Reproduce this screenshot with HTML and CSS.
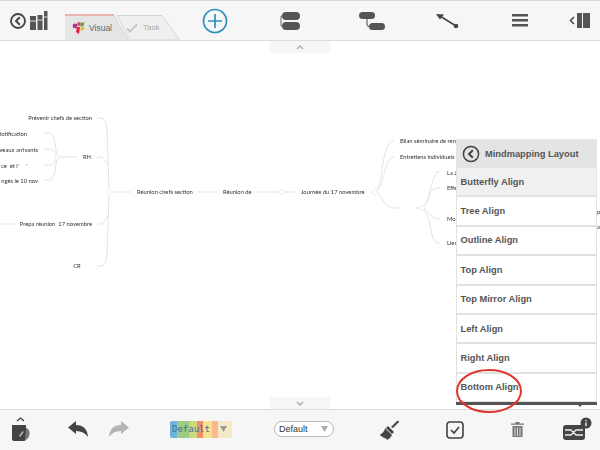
FILE: index.html
```html
<!DOCTYPE html>
<html lang="fr">
<head>
    <meta charset="UTF-8">
    <title>Mindmapping Layout</title>
    <link rel="stylesheet" href="styles.css">
</head>
<body>
    <div class="app">
        <!-- Barre du haut -->
        <header class="topbar">
            <div class="tools">
                <svg width="38" height="20" viewBox="0 0 38 20">
                    <circle cx="8" cy="10" r="7" fill="none" stroke="#444" stroke-width="1.800"/>
                    <path d="M9.800 6.200 6 10l3.800 3.800" fill="none" stroke="#444" stroke-width="2"/>
                    <path d="M20 5h6v14h-6zM27.500 4h5v15h-5zM34 0h3.500v19H34z" fill="#555"/>
                    <path d="M20 10h6M27.500 9h5M34 6h3.500" stroke="#ddd" stroke-width="1"/>
                </svg>
            </div>
            <div class="tabs">
                <svg class="tab-shape" width="115" height="26" viewBox="0 0 115 26">
                    <path d="M52 1.500h45L115 26H65z" fill="#efefef" stroke="#d6d6d0"/>
                    <path d="M0 1.500h49L63 26H0z" fill="#e5e5e5"/>
                    <path d="M0 1h49" stroke="#e2766c" stroke-width="1.200"/>
                    <path d="M49 1.500 63 26" stroke="#d4d4d4"/>
                </svg>
                <div class="tab tab-visual">
                    <svg width="14" height="14" viewBox="0 0 14 14">
                        <circle cx="3" cy="5" r="2.400" fill="#a63d97"/>
                        <circle cx="7" cy="3" r="2" fill="#ea4d4d"/>
                        <path d="M9 2l3.500-1-1 4-3 1z" fill="#5aa83c"/>
                        <path d="M10 6l3 1-3 3-2-2z" fill="#f0b429"/>
                        <path d="M5 6h3l-1 7-3-2z" fill="#e3213c"/>
                    </svg>
                    <span>Visual</span>
                </div>
                <div class="tab tab-task">
                    <svg width="12" height="10" viewBox="0 0 12 10">
                        <path d="M1 5.500 4 8.500 11 1.500" fill="none" stroke="#c4c4c4" stroke-width="1.800"/>
                    </svg>
                    <span>Task</span>
                </div>
            </div>
            <div class="slot">
                <svg width="26" height="26" viewBox="0 0 26 26">
                    <circle cx="13" cy="13" r="11.500" fill="none" stroke="#2a93bb" stroke-width="1.700"/>
                    <path d="M13 6v14M6 13h14" stroke="#2a93bb" stroke-width="1.700"/>
                </svg>
            </div>
            <div class="slot">
                <svg width="20" height="20" viewBox="0 0 20 20">
                    <path d="M3 5H1v10h2" stroke="#666" stroke-width="1" fill="none"/>
                    <rect x="2" y="1" width="18" height="8" rx="4" fill="#555"/>
                    <rect x="2" y="11" width="18" height="8" rx="4" fill="#555"/>
                </svg>
            </div>
            <div class="slot">
                <svg width="28" height="20" viewBox="0 0 28 20">
                    <path d="M9 6v7q0 3 5 3" stroke="#666" stroke-width="1.200" fill="none"/>
                    <rect x="1" y="1" width="16" height="7" rx="3.500" fill="#555"/>
                    <rect x="11" y="12" width="16" height="7" rx="3.500" fill="#555"/>
                </svg>
            </div>
            <div class="slot">
                <svg width="24" height="16" viewBox="0 0 24 16">
                    <path d="M5 3 21 13" stroke="#444" stroke-width="1.500"/>
                    <path d="M1 1l8 .500-4 5z" fill="#444"/>
                    <circle cx="21" cy="13" r="2.300" fill="#444"/>
                </svg>
            </div>
            <div class="slot">
                <svg width="16" height="13" viewBox="0 0 16 13">
                    <path d="M0 0h16v2.500H0zM0 5h16v2.500H0zM0 10h16v2.500H0z" fill="#555"/>
                </svg>
            </div>
            <div class="slot">
                <svg width="22" height="15" viewBox="0 0 22 15">
                    <path d="M5 4 1.500 7.500 5 11" fill="none" stroke="#444" stroke-width="1.500"/>
                    <path d="M8 0h5v15H8zM14 0h7v15h-7z" fill="#555"/>
                </svg>
            </div>
        </header>

        <!-- Carte mentale -->
        <main class="canvas">
            <svg class="map" width="600" height="368" viewBox="0 41 600 368">
                <g class="links">
                    <path d="M97 118h3q6 0 7 10l2 60"/>
                    <path d="M97 266h3q6 0 7-10l2-60"/>
                    <path d="M97 157h3q5 0 7 8"/>
                    <path d="M97 224h3q5 0 7-8"/>
                    <path d="M109 192h22"/>
                    <path d="M197 192h21"/>
                    <path d="M257 192h39"/>
                    <path d="M44 133h5q5 0 6 10l2 14-2 14q-1 9-6 9h-5"/>
                    <path d="M44 149h6q4 0 7 8M44 165h6q4 0 7-8"/>
                    <path d="M57 157h21"/>
                    <path d="M0 224h14"/>
                    <path d="M370 192h5q4-3 6-16q3-27 10-35h3"/>
                    <path d="M375 192q5-2 8-14q4-17 9-21h2"/>
                    <path d="M375 192q5 1 9 10q3 6 12 6h4"/>
                    <path d="M414 208h8q5-2 7-13q4-19 8-23h3"/>
                    <path d="M422 208q4-3 7-11q2-9 8-9h3"/>
                    <path d="M422 208q5 1 8 6t7 5h3"/>
                    <path d="M422 208q5 3 8 17q3 18 7 18h3"/>
                </g>
                <g class="junctions">
                    <circle cx="109" cy="192" r="2.500"/>
                    <circle cx="57" cy="157" r="2.500"/>
                    <circle cx="282" cy="192" r="2.500"/>
                    <circle cx="375" cy="192" r="2.500"/>
                    <circle cx="422" cy="208" r="2.500"/>
                </g>
                <g class="labels">
                    <text x="92" y="120" text-anchor="end">Prévenir chefs de section</text>
                    <text x="27" y="136" text-anchor="end">lotification</text>
                    <text x="38" y="152" text-anchor="end">veaux arrivants</text>
                    <text x="1" y="168">ce  et l'     '</text>
                    <text x="38" y="183" text-anchor="end">ngés le 10 nov</text>
                    <text x="87" y="159" text-anchor="middle">RH</text>
                    <text x="92" y="226" text-anchor="end">Prepa réunion  17 novembre</text>
                    <text x="77" y="268" text-anchor="middle">CR</text>
                    <text x="137" y="194">Réunion chefs section</text>
                    <text x="223" y="194">Réunion de</text>
                    <text x="301" y="194">Journée du 17 novembre</text>
                    <text x="400" y="143">Bilan séminaire de ren</text>
                    <text x="400" y="159">Entretiens individuels</text>
                    <text x="447" y="175">La J</text>
                    <text x="447" y="190">Effe</text>
                    <text x="447" y="221">Mo</text>
                    <text x="447" y="245">Lier</text>
                    <text x="597" y="214">p</text>
                    <text x="597" y="229">a</text>
                </g>
            </svg>

            <div class="handle handle-top">
                <svg width="8" height="5" viewBox="0 0 8 5"><path d="M1 4l3-3 3 3" fill="none" stroke="#aaa" stroke-width="1.300"/></svg>
            </div>
            <div class="handle handle-bottom">
                <svg width="8" height="5" viewBox="0 0 8 5"><path d="M1 1l3 3 3-3" fill="none" stroke="#aaa" stroke-width="1.300"/></svg>
            </div>

            <!-- Menu de disposition -->
            <section class="layout-panel">
                <div class="panel-head">
                    <svg width="18" height="18" viewBox="0 0 18 18">
                        <circle cx="9" cy="9" r="7.600" fill="none" stroke="#444" stroke-width="1.500"/>
                        <path d="M10.800 5.200 7 9l3.800 3.800" fill="none" stroke="#444" stroke-width="2"/>
                    </svg>
                    <span>Mindmapping Layout</span>
                </div>
                <ul class="panel-list">
                    <li class="current">Butterfly Align</li>
                    <li>Tree Align</li>
                    <li>Outline Align</li>
                    <li>Top Align</li>
                    <li>Top Mirror Align</li>
                    <li>Left Align</li>
                    <li>Right Align</li>
                    <li>Bottom Align</li>
                </ul>
                <div class="panel-foot"></div>
            </section>

            <svg class="red-circle" width="70" height="46" viewBox="0 0 70 46">
                <ellipse cx="35" cy="23" rx="32" ry="21" fill="none" stroke="#e0352b" stroke-width="2"/>
            </svg>
        </main>

        <!-- Barre du bas -->
        <footer class="bottombar">
            <div class="btn btn-cup">
                <svg width="20" height="26" viewBox="0 0 20 26">
                    <path d="M6 4 9.500 1 13 4" fill="none" stroke="#444" stroke-width="1.300"/>
                    <path d="M1 8h14v14q0 2-2 2H3q-2 0-2-2z" fill="#444"/>
                    <path d="M15 11q4 1 3.500 6t-4.500 6" fill="#777"/>
                    <path d="M8 19l3.500-5 1.200 1-3.500 5z" fill="#bbb"/>
                </svg>
            </div>
            <div class="btn btn-undo">
                <svg width="22" height="16" viewBox="0 0 22 16">
                    <path d="M1 6.500 9 0v4q11 0 12 12q-4-6-12-6v3z" fill="#444"/>
                </svg>
            </div>
            <div class="btn btn-redo">
                <svg width="22" height="16" viewBox="0 0 22 16">
                    <path d="M21 6.500 13 0v4Q2 4 1 16q4-6 12-6v3z" fill="#b4b4b4"/>
                </svg>
            </div>
            <div class="style-select">
                <span>Default</span>
                <svg width="7" height="6" viewBox="0 0 7 6"><path d="M0 0h7L3.500 6z" fill="#999"/></svg>
            </div>
            <div class="pill-select">
                <span>Default</span>
                <svg width="7" height="6" viewBox="0 0 7 6"><path d="M0 0h7L3.500 6z" fill="#aaa"/></svg>
            </div>
            <div class="btn btn-brush">
                <svg width="21" height="21" viewBox="0 0 21 21">
                    <path d="M12 7 18 1q2-1 2 1l-6 6z" fill="#444"/>
                    <path d="M9 6l6 6-2 2-6-6z" fill="#444"/>
                    <path d="M6 8l7 7q-1 3-5 5l-1-2-1 1-1-2-1 1-1-2-1 .500-1-2q4-2 5-6z" fill="#444"/>
                </svg>
            </div>
            <div class="btn btn-check">
                <svg width="18" height="18" viewBox="0 0 18 18">
                    <rect x="1" y="1" width="16" height="16" rx="3" fill="none" stroke="#444" stroke-width="1.600"/>
                    <path d="M5 9l3 3 5-6" fill="none" stroke="#444" stroke-width="1.700"/>
                </svg>
            </div>
            <div class="btn btn-trash">
                <svg width="13" height="16" viewBox="0 0 13 16">
                    <path d="M0 2.500h13v1.300H0zM4.500 1h4v1.500h-4z" fill="#777"/>
                    <path d="M1.500 5h10v11h-10z" fill="#777"/>
                    <path d="M4 6.500V15M6.500 6.500V15M9 6.500V15" stroke="#f6f6f6" stroke-width=".8"/>
                </svg>
            </div>
            <div class="btn btn-map">
                <svg width="30" height="24" viewBox="0 0 30 24">
                    <rect x="1" y="8" width="22" height="15" rx="3" fill="#444"/>
                    <path d="M3 13h6l5 5h7M3 18h6l5-5h7" fill="none" stroke="#eee" stroke-width="1.300"/>
                    <circle cx="24" cy="6" r="5.500" fill="#444"/>
                    <path d="M24 5.500V9M24 3v1.200" stroke="#fff" stroke-width="1.300"/>
                </svg>
            </div>
        </footer>
    </div>
</body>
</html>
```

FILE: styles.css
```css
/* Styles généraux */
body {
    margin: 0;
    font-family: "Liberation Sans", Arial, sans-serif;
    background-color: #fff;
}
.app {
    display: flex;
    flex-direction: column;
    width: 600px;
    height: 450px;
    overflow: hidden;
}

/* Barre du haut */
.topbar {
    display: grid;
    grid-template-columns: 65px 115px 70px 80px 84px 66px 80px 40px;
    height: 39px;
    background-color: #f6f6f6;
    border-top: 1px solid #d8d8d8;
    border-bottom: 1px solid #dcdcdc;
}
.tools {
    display: flex;
    align-items: center;
    padding-left: 10px;
}
.slot {
    display: flex;
    align-items: center;
    justify-content: center;
}
.tabs {
    position: relative;
    display: flex;
    padding-top: 14px;
}
.tab-shape {
    position: absolute;
    left: 0;
    bottom: 0;
}
.tab {
    position: relative;
    display: flex;
    align-items: center;
    height: 25px;
}
.tab-visual {
    width: 52px;
    gap: 3px;
    padding-left: 7px;
    box-sizing: border-box;
    font-size: 8.5px;
    color: #666;
}
.tab-task {
    gap: 5px;
    padding-left: 9px;
    font-size: 8px;
    color: #aaa;
}

/* Carte mentale */
.canvas {
    position: relative;
    z-index: 1;
    flex: 1;
}
.map {
    display: block;
    filter: blur(0.3px);
}
.links path {
    fill: none;
    stroke: #e4e4e4;
    stroke-width: 1;
}
.junctions circle {
    fill: #fff;
    stroke: #eee;
}
.labels text {
    font-family: Lato, sans-serif;
    font-size: 5.8px;
    fill: #333;
    white-space: pre;
}
.handle {
    position: absolute;
    left: 270px;
    width: 60px;
    height: 12px;
    display: flex;
    align-items: center;
    justify-content: center;
    background-color: #f6f6f6;
}
.handle-top {
    top: 0;
}
.handle-bottom {
    bottom: 0;
}

/* Menu de disposition */
.layout-panel {
    position: absolute;
    left: 456px;
    top: 98px;
    width: 141px;
    height: 266px;
    display: flex;
    flex-direction: column;
    background-color: #e2e2e2;
}
.panel-head {
    display: flex;
    align-items: center;
    gap: 5px;
    height: 29px;
    padding-left: 6px;
    background-color: #e4e4e4;
    font-size: 9.3px;
    font-weight: bold;
    color: #555;
    flex-shrink: 0;
}
.panel-list {
    list-style: none;
    margin: 0;
    padding: 0 1px;
    display: grid;
    grid-auto-rows: 27.4px;
    row-gap: 2px;
}
.panel-list li {
    display: flex;
    align-items: center;
    padding-left: 3.5px;
    background-color: #fff;
    font-size: 9.3px;
    font-weight: bold;
    color: #555;
}
.panel-list li.current {
    background-color: #f0f0f0;
}
.panel-foot {
    position: relative;
    margin-top: auto;
    height: 3px;
    background-color: #555;
}
.panel-foot::after {
    content: "";
    position: absolute;
    right: 15px;
    top: 3px;
    border: 2px solid transparent;
    border-top-color: #555;
}
.red-circle {
    position: absolute;
    left: 454px;
    top: 327px;
}

/* Barre du bas */
.bottombar {
    display: flex;
    align-items: center;
    height: 40px;
    background-color: #f6f6f6;
    border-top: 1px solid #dcdcdc;
    flex-shrink: 0;
}
.btn {
    display: flex;
    align-items: center;
    justify-content: center;
    width: 30px;
}
.btn-cup { margin-left: 6px; }
.btn-undo { margin-left: 27px; margin-top: -3px; }
.btn-redo { margin-left: 11px; margin-top: -3px; }
.btn-brush { margin-left: 40px; }
.btn-check { margin-left: 36px; }
.btn-trash { margin-left: 32px; margin-top: -2px; }
.btn-map { margin-left: 30px; margin-top: -3px; }
.style-select {
    display: flex;
    align-items: center;
    justify-content: space-between;
    box-sizing: border-box;
    width: 62px;
    height: 17px;
    margin-left: 36px;
    margin-top: -2px;
    padding: 0 5px 0 2px;
    border-radius: 2px;
    background: linear-gradient(90deg, #6db5de 0 12%, #9ccb83 12% 30%, #c9d97c 30% 43%, #ef8f6c 43% 54%, #f5e48f 54% 67%, #f8b98c 67% 77%, #f6e9c8 77% 100%);
    font-family: "DejaVu Sans Mono", monospace;
    font-size: 9px;
    color: #3d6f9c;
}
.pill-select {
    display: flex;
    align-items: center;
    justify-content: space-between;
    box-sizing: border-box;
    width: 60px;
    height: 16px;
    margin-left: 42px;
    margin-top: -2px;
    padding: 0 5px 0 4px;
    border: 1px solid #bbb;
    border-radius: 8px;
    background-color: #fff;
    font-size: 9px;
    color: #333;
}
```
